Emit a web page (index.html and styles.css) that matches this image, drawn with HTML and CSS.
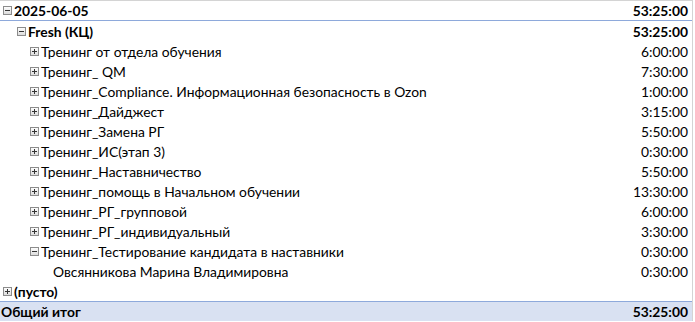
FILE: index.html
```html
<!DOCTYPE html>
<html lang="ru">
<head>
    <meta charset="UTF-8">
    <meta name="viewport" content="width=device-width, initial-scale=1.0">
    <title>Сводная таблица</title>

    <link rel="stylesheet" href="styles.css">
</head>
<body>
    <div class="pivot">
        <div class="row head">
            <span class="label lvl0 bold"><i class="toggle minus"></i>2025-06-05</span>
            <span class="value bold">53:25:00</span>
        </div>
        <div class="row">
            <span class="label lvl1 bold"><i class="toggle minus"></i>Fresh (КЦ)</span>
            <span class="value bold">53:25:00</span>
        </div>
        <div class="row">
            <span class="label lvl2"><i class="toggle plus"></i>Тренинг от отдела обучения</span>
            <span class="value">6:00:00</span>
        </div>
        <div class="row">
            <span class="label lvl2"><i class="toggle plus"></i>Тренинг_ QM</span>
            <span class="value">7:30:00</span>
        </div>
        <div class="row">
            <span class="label lvl2"><i class="toggle plus"></i>Тренинг_Compliance. Информационная безопасность в Ozon</span>
            <span class="value">1:00:00</span>
        </div>
        <div class="row">
            <span class="label lvl2"><i class="toggle plus"></i>Тренинг_Дайджест</span>
            <span class="value">3:15:00</span>
        </div>
        <div class="row">
            <span class="label lvl2"><i class="toggle plus"></i>Тренинг_Замена РГ</span>
            <span class="value">5:50:00</span>
        </div>
        <div class="row">
            <span class="label lvl2"><i class="toggle plus"></i>Тренинг_ИС(этап 3)</span>
            <span class="value">0:30:00</span>
        </div>
        <div class="row">
            <span class="label lvl2"><i class="toggle plus"></i>Тренинг_Наставничество</span>
            <span class="value">5:50:00</span>
        </div>
        <div class="row">
            <span class="label lvl2"><i class="toggle plus"></i>Тренинг_помощь в Начальном обучении</span>
            <span class="value">13:30:00</span>
        </div>
        <div class="row">
            <span class="label lvl2"><i class="toggle plus"></i>Тренинг_РГ_групповой</span>
            <span class="value">6:00:00</span>
        </div>
        <div class="row">
            <span class="label lvl2"><i class="toggle plus"></i>Тренинг_РГ_индивидуальный</span>
            <span class="value">3:30:00</span>
        </div>
        <div class="row">
            <span class="label lvl2"><i class="toggle minus"></i>Тренинг_Тестирование кандидата в наставники</span>
            <span class="value">0:30:00</span>
        </div>
        <div class="row">
            <span class="label lvl3">Овсянникова Марина Владимировна</span>
            <span class="value">0:30:00</span>
        </div>
        <div class="row">
            <span class="label lvl0 bold"><i class="toggle plus"></i>(пусто)</span>
            <span class="value"></span>
        </div>
        <div class="row total">
            <span class="label bold">Общий итог</span>
            <span class="value bold">53:25:00</span>
        </div>
    </div>
</body>
</html>
```

FILE: styles.css
```css
* {
    margin: 0;
    padding: 0;
    box-sizing: border-box;
}

body {
    font-family: Lato, "Open Sans", sans-serif;
    font-size: 13.85px;
    color: #000;
    background: #fff;
}

/* Pivot table */
.pivot {
    width: 693px;
    border-top: 1px solid #d4d4d4;
    border-right: 1px solid #d4d4d4;
}

.row {
    display: flex;
    justify-content: space-between;
    align-items: center;
    height: 20px;
    padding-right: 4px;
}

.row.head {
    border-bottom: 1px solid #8ea9db;
}

.row.total {
    border-top: 1px solid #8ea9db;
    background-color: #d9e1f2;
}

.label {
    display: flex;
    align-items: center;
    white-space: nowrap;
    padding-left: 1px;
}

.lvl0 { padding-left: 3px; }
.lvl1 { padding-left: 17px; }
.lvl2 { padding-left: 30px; }
.lvl3 { padding-left: 53px; }

.bold {
    font-weight: bold;
}

/* Expand / collapse buttons */
.toggle {
    position: relative;
    width: 9px;
    height: 9px;
    margin-right: 2px;
    border: 1px solid #8c8c8c;
    background: linear-gradient(#fdfdfd, #dcdcdc);
    flex-shrink: 0;
}

.toggle::before,
.toggle.plus::after {
    content: "";
    position: absolute;
    background: #333;
}

.toggle::before {
    left: 1px;
    top: 3px;
    width: 5px;
    height: 1px;
}

.toggle.plus::after {
    left: 3px;
    top: 1px;
    width: 1px;
    height: 5px;
}
```
